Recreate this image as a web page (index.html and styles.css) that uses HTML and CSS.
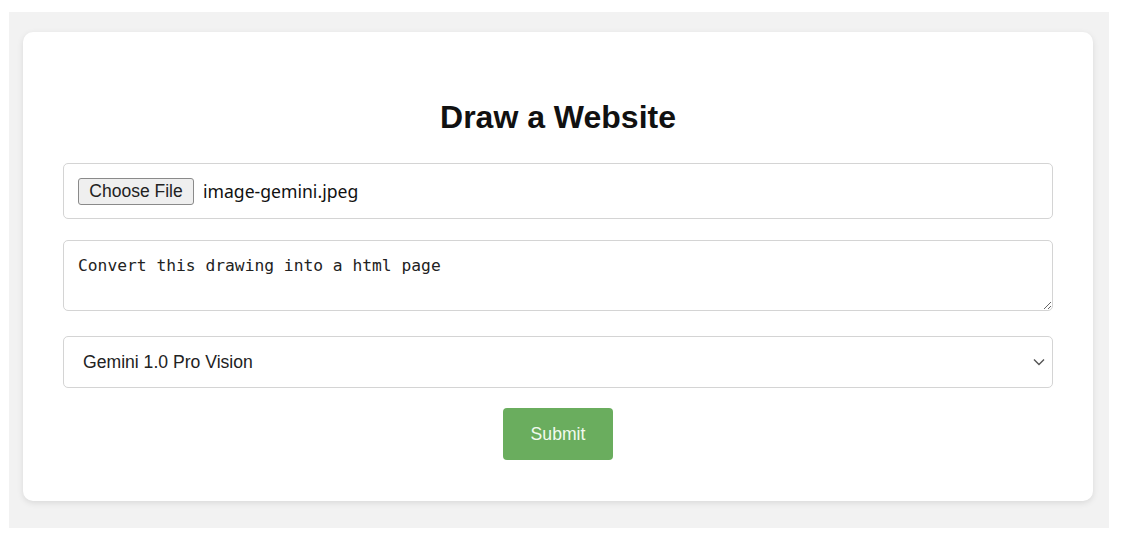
FILE: index.html
```html
<!DOCTYPE html>
<html>
<head>
<meta charset="utf-8">
<link rel="stylesheet" href="styles.css">
</head>
<body>
<div class="page">
  <form class="card">
    <h1 class="title">Draw a Website</h1>
    <div class="field file-field">
      <button type="button" class="file-btn">Choose File</button>
      <span class="file-name">image-gemini.jpeg</span>
    </div>
    <textarea class="field prompt">Convert this drawing into a html page</textarea>
    <div class="select-wrap">
      <select class="field model">
        <option>Gemini 1.0 Pro Vision</option>
      </select>
      <svg class="chevron" width="12" height="8" viewBox="0 0 12 8"><path d="M1 1.5 L6 6.5 L11 1.5" fill="none" stroke="#555" stroke-width="1.4"/></svg>
    </div>
    <div class="actions">
      <button type="button" class="submit">Submit</button>
    </div>
  </form>
</div>
</body>
</html>
```

FILE: styles.css
```css
html, body {
  margin: 0;
  padding: 0;
  background: #ffffff;
}
body {
  font-family: "Liberation Sans", Arial, sans-serif;
}
.page {
  margin: 12px 16px 0 9px;
  height: 516px;
  background: #f2f2f2;
  padding: 20px 16px 0 14px;
  box-sizing: border-box;
}
.card {
  background: #ffffff;
  border-radius: 10px;
  box-shadow: 0 2px 6px rgba(0, 0, 0, 0.10);
  padding: 40px 40px 40px 40px;
  height: 469px;
  box-sizing: border-box;
  display: flex;
  flex-direction: column;
}
.title {
  margin: 27px 0 28px 0;
  font-size: 32px;
  line-height: 36px;
  font-weight: bold;
  text-align: center;
  color: #111;
}
.field {
  box-sizing: border-box;
  width: 100%;
  border: 1px solid #d4d4d4;
  border-radius: 5px;
  background: #fff;
}
.file-field {
  height: 56px;
  display: flex;
  align-items: center;
  padding: 0 14px;
  gap: 9px;
}
.file-btn {
  height: 27px;
  width: 116px;
  padding: 0;
  background: #efefef;
  border: 1px solid #8a8a8a;
  border-radius: 3px;
  font-family: "Liberation Sans", Arial, sans-serif;
  font-size: 17.5px;
  color: #222;
}
.file-name {
  font-family: "Noto Sans", "Open Sans", sans-serif;
  font-size: 17.6px;
  color: #111;
}
.prompt {
  margin-top: 21px;
  height: 71px;
  padding: 14px 14px;
  font-family: "DejaVu Sans Mono", monospace;
  font-size: 16.3px;
  line-height: 22px;
  color: #222;
  resize: vertical;
}
.select-wrap {
  position: relative;
  margin-top: 25px;
}
.model {
  display: block;
  height: 52px;
  padding: 0 19px;
  -webkit-appearance: none;
  appearance: none;
  font-family: "Liberation Sans", Arial, sans-serif;
  font-size: 17.6px;
  color: #222;
}
.chevron {
  position: absolute;
  right: 8px;
  top: 22px;
}
.actions {
  display: flex;
  justify-content: center;
  margin-top: 20px;
}
.submit {
  width: 110px;
  height: 52px;
  background: #6aad5e;
  border: none;
  border-radius: 4px;
  color: #f2faee;
  font-family: "Liberation Sans", Arial, sans-serif;
  font-size: 17.6px;
}
```
